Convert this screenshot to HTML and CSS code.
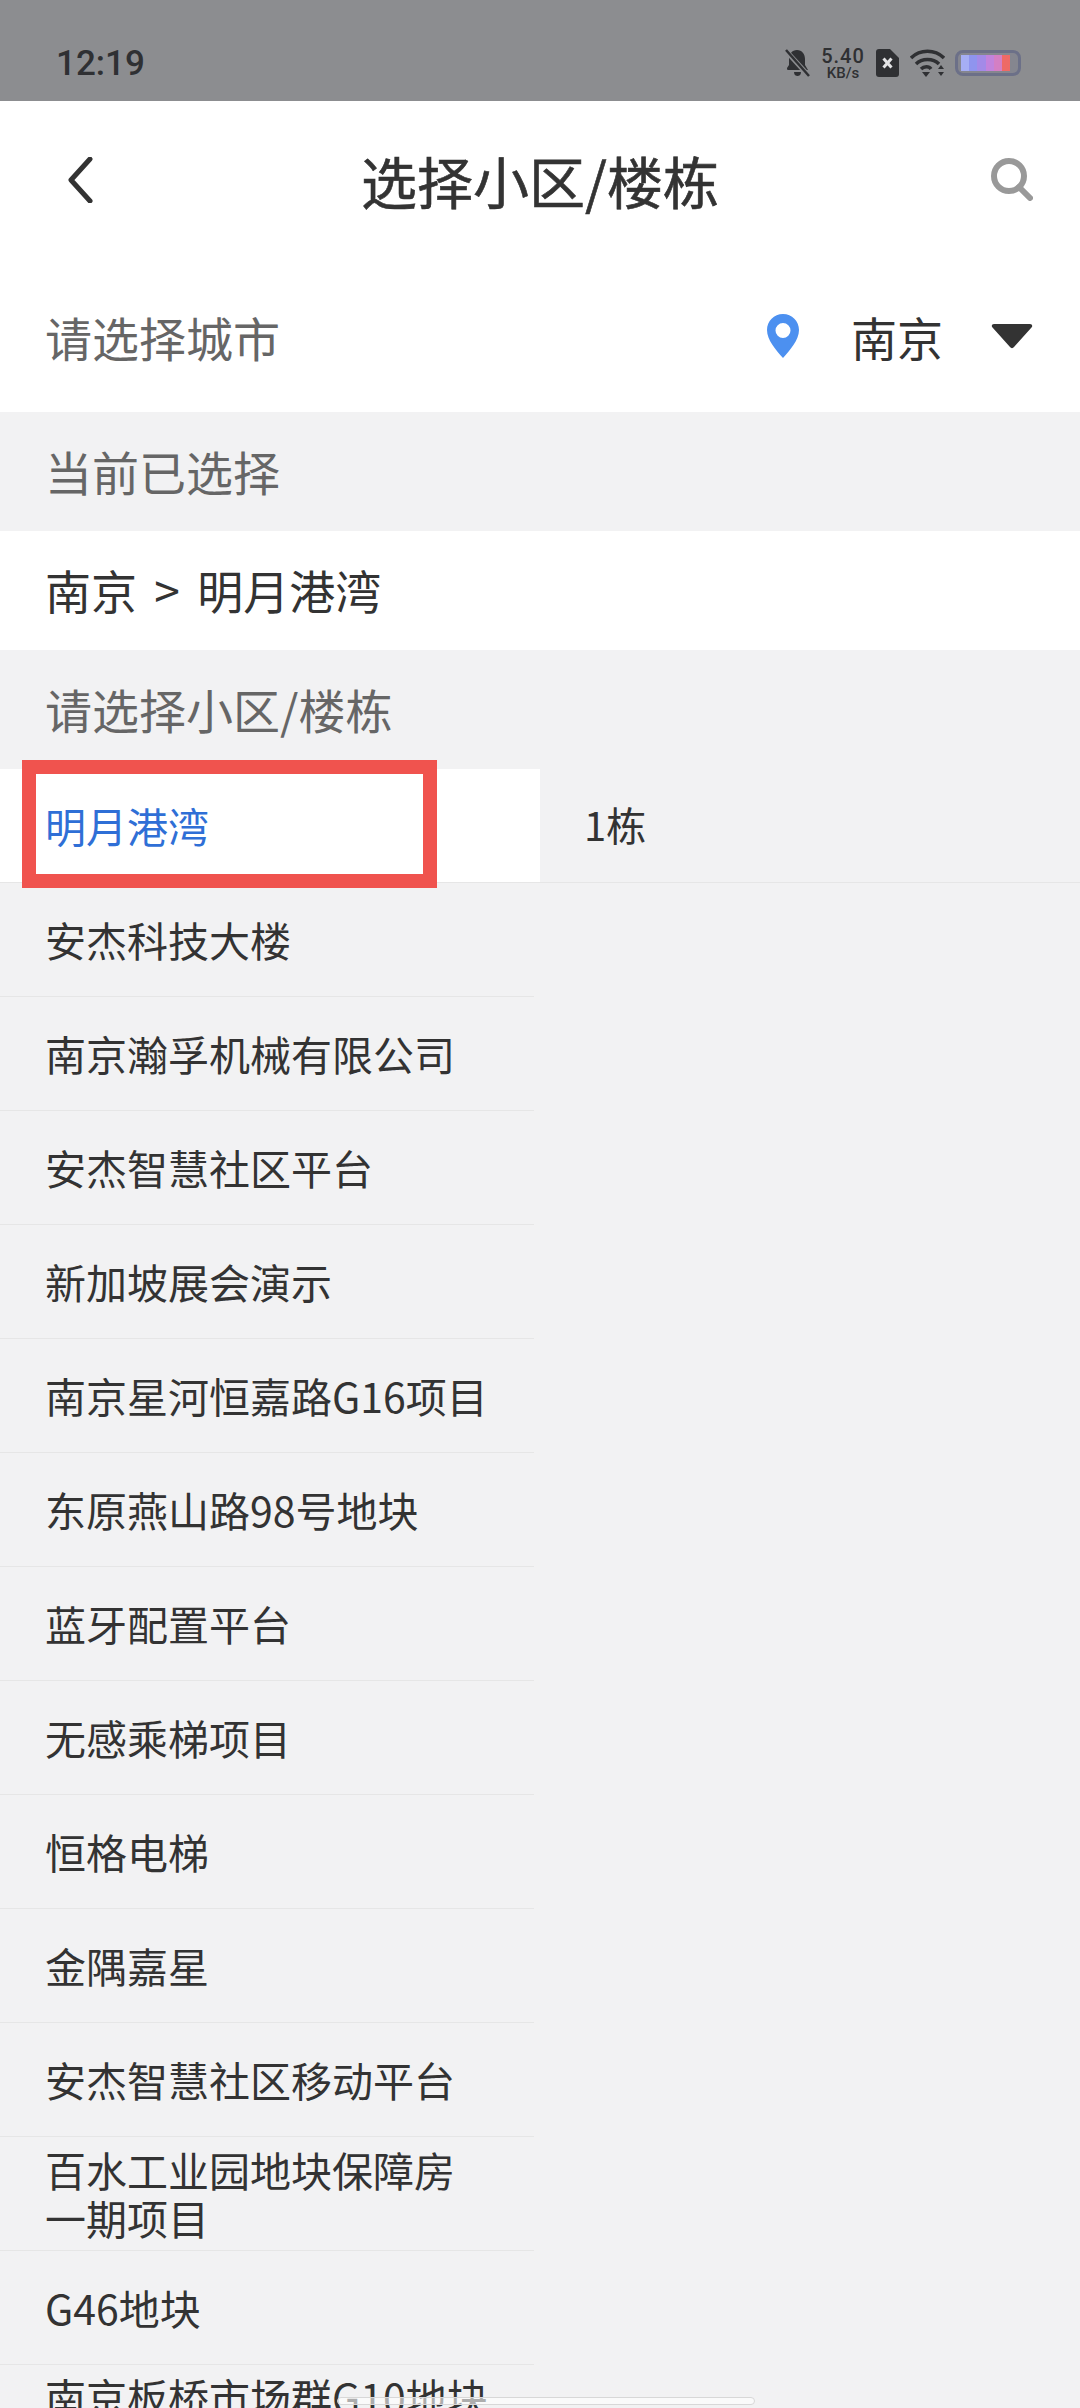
FILE: index.html
```html
<!DOCTYPE html>
<html lang="zh-CN">

<head>
    <meta charset="UTF-8">
    <meta name="viewport" content="width=device-width, initial-scale=1.0">
    <title>选择小区/楼栋</title>
    <link rel="stylesheet" href="styles.css">
</head>

<body>
    <div class="page">
        <div class="status-bar">
            <span class="time">12:19</span>
            <div class="status-icons">
                <svg class="icon-bell" width="25" height="28" viewBox="0 0 25 28">
                    <path d="M12 1c5 0 8 4 8 9v6l3 5H3c-1 0-1-1-1-2l2-3v-6c0-5 3-9 8-9z" fill="#2f3033"/>
                    <path d="M9 23h7c0 3-2 4-3.500 4S9 26 9 23z" fill="#2f3033"/>
                    <path d="M1 2l23 25" stroke="#8c8d90" stroke-width="5"/>
                    <path d="M1 1l23 26" stroke="#2f3033" stroke-width="2.500"/>
                </svg>
                <div class="speed">
                    <span class="speed-num">5.40</span>
                    <span class="speed-unit">KB/s</span>
                </div>
                <svg class="icon-sim" width="23" height="28" viewBox="0 0 23 28">
                    <path d="M3 0h11l9 9v16c0 2-1 3-3 3H3c-2 0-3-1-3-3V3c0-2 1-3 3-3z" fill="#2f3033"/>
                    <path d="M7.500 9.500l8 9M15.500 9.500l-8 9" stroke="#e4e4e6" stroke-width="3"/>
                </svg>
                <svg class="icon-wifi" width="35" height="28" viewBox="0 0 35 28">
                    <path d="M1 9c9-9 24-9 33 0" fill="none" stroke="#2f3033" stroke-width="3.500"/>
                    <path d="M6 15c6-6 17-6 23 0" fill="none" stroke="#2f3033" stroke-width="3.500"/>
                    <path d="M11 20c3-3 8-3 10 0" fill="none" stroke="#2f3033" stroke-width="3.500"/>
                    <path d="M12 23h8l-4 5z" fill="#2f3033"/>
                    <path d="M31 16l3 4h-6zM28 23h6l-3 4z" fill="#2f3033"/>
                </svg>
                <div class="battery"><div class="battery-fill"></div></div>
            </div>
        </div>

        <header class="nav-bar">
            <svg class="back-icon" width="26" height="46" viewBox="0 0 26 46">
                <path d="M23 2L4 23l19 21" fill="none" stroke="#333" stroke-width="5" stroke-linecap="round" stroke-linejoin="round"/>
            </svg>
            <h1>选择小区/楼栋</h1>
            <svg class="search-icon" width="42" height="43" viewBox="0 0 42 43">
                <circle cx="18" cy="18" r="15" fill="none" stroke="#999" stroke-width="6"/>
                <path d="M28 29l11 11" fill="none" stroke="#999" stroke-width="6" stroke-linecap="round"/>
            </svg>
        </header>

        <div class="city-row">
            <span class="city-label">请选择城市</span>
            <div class="city-picker">
                <svg class="pin-icon" width="32" height="44" viewBox="0 0 32 44">
                    <path fill-rule="evenodd" d="M16 0c9 0 16 7 16 16 0 10-9 20-16 28C9 36 0 26 0 16 0 7 7 0 16 0zm0 9a7.500 7.500 0 1 0 0 15 7.500 7.500 0 0 0 0-15z" fill="#4c90f0"/>
                </svg>
                <span class="city-name">南京</span>
                <svg class="arrow-icon" width="42" height="26" viewBox="0 0 42 26">
                    <path d="M3 1h36c2 0 3 2 1.500 3.500L23 24c-1 1.500-3 1.500-4 0L1.500 4.500C0 3 1 1 3 1z" fill="#333"/>
                </svg>
            </div>
        </div>

        <div class="section-title">当前已选择</div>
        <div class="current-row">南京 &gt; 明月港湾</div>
        <div class="section-title">请选择小区/楼栋</div>

        <div class="picker">
            <ul class="estate-list">
                <li class="estate-item active">
                    <span>明月港湾</span>
                    <div class="highlight-box"></div>
                </li>
                <li class="estate-item"><span>安杰科技大楼</span></li>
                <li class="estate-item"><span>南京瀚孚机械有限公司</span></li>
                <li class="estate-item"><span>安杰智慧社区平台</span></li>
                <li class="estate-item"><span>新加坡展会演示</span></li>
                <li class="estate-item"><span>南京星河恒嘉路G16项目</span></li>
                <li class="estate-item"><span>东原燕山路98号地块</span></li>
                <li class="estate-item"><span>蓝牙配置平台</span></li>
                <li class="estate-item"><span>无感乘梯项目</span></li>
                <li class="estate-item"><span>恒格电梯</span></li>
                <li class="estate-item"><span>金隅嘉星</span></li>
                <li class="estate-item"><span>安杰智慧社区移动平台</span></li>
                <li class="estate-item"><span>百水工业园地块保障房一期项目</span></li>
                <li class="estate-item"><span>G46地块</span></li>
                <li class="estate-item cut-off"><span>南京板桥市场群G10地块</span></li>
            </ul>
            <ul class="building-list">
                <li class="building-item">1栋</li>
            </ul>
        </div>

        <div class="home-bar"></div>
    </div>
</body>

</html>
```

FILE: styles.css
```css
/* Page */
html,
body {
    margin: 0;
    padding: 0;
}

body {
    font-family: "Noto Sans CJK SC", "Noto Sans", sans-serif;
    background-color: #f2f2f3;
    color: #333;
}

.page {
    position: relative;
    width: 1080px;
    height: 2408px;
    overflow: hidden;
}

ul {
    list-style: none;
    margin: 0;
    padding: 0;
}

/* Status bar */
.status-bar {
    height: 101px;
    box-sizing: border-box;
    padding: 47px 59px 0 56px;
    background-color: #8c8d90;
    color: #2f3033;
    display: flex;
    justify-content: space-between;
    align-items: flex-start;
}

.time {
    font-family: Roboto, sans-serif;
    font-weight: 500;
    font-size: 35px;
    line-height: 34px;
}

.status-icons {
    display: flex;
    align-items: center;
    height: 32px;
}

.speed {
    display: flex;
    flex-direction: column;
    align-items: center;
    font-family: Roboto, sans-serif;
    font-weight: 500;
    width: 44px;
    margin: 0 11px;
}

.speed-num {
    font-size: 20px;
    line-height: 20px;
    letter-spacing: 1px;
}

.speed-unit {
    font-size: 15px;
    line-height: 15px;
}

.icon-wifi {
    margin: 0 10px 0 11px;
}

.battery {
    width: 66px;
    height: 26px;
    box-sizing: border-box;
    border: 3px solid #6c7088;
    border-radius: 8px;
    padding: 2px 3px;
    background-color: #85868f;
}

.battery-fill {
    height: 100%;
    width: 90%;
    background: linear-gradient(90deg,
        #a6aef4 0 16%, #8f94ee 16% 33%, #a38ae8 33% 50%,
        #c283dc 50% 67%, #d47fc4 67% 84%, #ee6a66 84% 100%);
}

/* Nav bar */
.nav-bar {
    height: 162px;
    box-sizing: border-box;
    padding: 0 47px 5px 67px;
    background: white;
    display: grid;
    grid-template-columns: 1fr auto 1fr;
    align-items: center;
}

.nav-bar h1 {
    margin: 0 20px 0 0;
    font-size: 56px;
    font-weight: 400;
    color: #333;
    -webkit-text-stroke: 0.6px #333;
}

.search-icon {
    justify-self: end;
}

/* City row */
.city-row {
    height: 149px;
    box-sizing: border-box;
    padding: 0 47px 3px 45px;
    background: white;
    display: flex;
    justify-content: space-between;
    align-items: center;
}

.city-label {
    font-size: 47px;
    color: #666;
}

.city-picker {
    display: flex;
    align-items: center;
}

.pin-icon {
    margin-right: 52px;
}

.city-name {
    font-size: 46px;
    color: #333;
    margin-right: 48px;
}

/* Section rows */
.section-title {
    height: 119px;
    padding-left: 45px;
    font-size: 47px;
    line-height: 117px;
    color: #666;
}

.current-row {
    height: 119px;
    padding-left: 45px;
    font-size: 46px;
    line-height: 117px;
    word-spacing: 7px;
    color: #333;
    background: white;
}

/* Two columns */
.picker {
    display: flex;
    align-items: flex-start;
}

.estate-list {
    width: 540px;
    flex-shrink: 0;
}

.estate-item {
    position: relative;
    width: 534px;
    height: 114px;
    box-sizing: border-box;
    padding: 0 43px 2px 45px;
    border-bottom: 1px solid #e6e6e6;
    font-size: 41px;
    line-height: 48px;
    color: #333;
    display: flex;
    align-items: center;
}

.estate-item.active {
    width: 540px;
    background: white;
    color: #2f6fd6;
}

/* last row runs past the bottom of the window, first line only */
.estate-item.cut-off {
    align-items: flex-start;
    padding-top: 7px;
}

.highlight-box {
    position: absolute;
    left: 22px;
    top: -9px;
    width: 415px;
    height: 128px;
    box-sizing: border-box;
    border: 14px solid #f0534e;
}

.building-list {
    flex: 1;
}

.building-item {
    height: 114px;
    box-sizing: border-box;
    padding-left: 44px;
    border-bottom: 1px solid #e6e6e6;
    font-size: 40px;
    line-height: 111px;
    color: #333;
}

/* Gesture bar over the list */
.home-bar {
    position: absolute;
    left: 337px;
    top: 2397px;
    width: 418px;
    height: 8px;
    box-sizing: border-box;
    background: rgba(255, 255, 255, 0.6);
    border: 1px solid #d8d8d8;
    border-radius: 4px;
}
```
